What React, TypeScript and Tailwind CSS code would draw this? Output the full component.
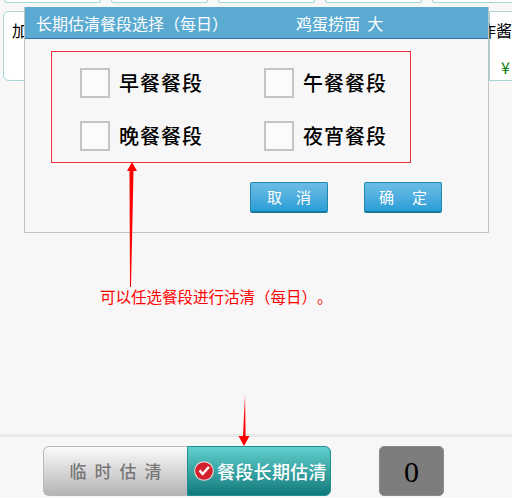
const font = { fontFamily: '"Noto Sans CJK SC", "Liberation Sans", sans-serif' };

function MealOption({ label }: { label: string }) {
  return (
    <div className="flex w-[184px] shrink-0 items-center">
      <div className="h-[30px] w-[30px] border-2 border-[#c4c4c4] bg-[#fbfbfb]" />
      <span className="ml-[9px] text-[20px] font-medium leading-[30px] tracking-[1px] text-black">{label}</span>
    </div>
  );
}

function DialogButton({ first, second, className }: { first: string; second: string; className: string }) {
  return (
    <button
      type="button"
      className={`flex h-[31px] w-[78px] items-center justify-center rounded-[2px] border border-[#1d88a8] border-b-2 border-b-[#177a9c] bg-gradient-to-b from-[#6cbde6] to-[#279ed6] text-[15px] text-white ${className}`}
    >
      <span>{first}</span>
      <span>{second}</span>
    </button>
  );
}

function TopCard({ className }: { className?: string }) {
  return <div className={`h-[3px] w-[97px] shrink-0 rounded-b-[5px] border border-t-0 border-[#a5d6d6] bg-white ${className ?? ""}`} />;
}

export default function App() {
  return (
    <div className="relative flex h-[498px] w-[512px] flex-col overflow-hidden bg-[#f7f7f7]" style={font}>
      <div className="flex h-[4px] gap-[10px] pl-[4px]">
        <TopCard />
        <TopCard />
        <TopCard />
        <TopCard />
        <TopCard />
      </div>

      <div className="mt-[7px] flex h-[70px] justify-between">
        <div className="ml-[3px] h-full w-[97px] rounded-[6px] border border-[#a5d6d6] bg-white pl-[8px] pt-[7px] text-[16px] leading-[22px] text-black">
          加
        </div>
        <div className="flex h-full w-[23px] flex-col justify-between border-y border-l border-[#a5d6d6] bg-white pb-[3px] pt-[7px]">
          <span className="whitespace-nowrap text-[16px] leading-[22px] text-black [direction:rtl]">炸酱</span>
          <span className="pl-[11px] text-[16px] leading-[20px] text-[#0a7d0a]">¥</span>
        </div>
      </div>

      <div className="flex-1" />

      <div className="h-[3px] bg-[#e8e8e8]" />
      <div className="flex h-[61px] pl-[43px] pt-[9px]">
        <button
          type="button"
          className="h-[50px] w-[144px] rounded-l-[6px] border border-r-0 border-[#b8b8b8] bg-gradient-to-b from-[#fbfbfb] to-[#b4b3b5] pl-[8px] text-[17px] font-medium tracking-[8px] text-[#777]"
        >
          临时估清
        </button>
        <button
          type="button"
          className="flex h-[50px] w-[144px] items-center rounded-r-[6px] border border-[#1f8f8f] bg-gradient-to-b from-[#5fd0cf] to-[#0d7a7c] pl-[6px] text-[18px] font-medium tracking-[0.3px] text-white"
        >
          <svg width="20" height="20" viewBox="0 0 20 20" className="shrink-0">
            <circle cx="10" cy="10" r="9.8" fill="#f2e4e4" />
            <circle cx="10" cy="10" r="8.8" fill="#d3202c" />
            <path d="M4.6 10.2 L8.6 14.8 L16 6.4 L13.9 5.2 L8.7 11.2 L6.4 8.6 Z" fill="#fff" />
          </svg>
          <span className="ml-[3px] leading-none">餐段长期估清</span>
        </button>
        <div className="ml-[48px] flex h-[50px] w-[65px] items-center justify-center rounded-[5px] border border-[#8c8c8c] bg-[#7d7d7d] text-[30px] text-black [font-family:'Liberation_Serif',serif]">
          0
        </div>
      </div>

      {/* dialog sits over the page */}
      <div className="absolute left-[24px] top-[7px] flex h-[226px] w-[465px] flex-col border-x border-b border-[#c2c2c2] bg-[#f7f7f7]">
        <div className="flex h-[32px] shrink-0 items-center border-b border-[#2f74a0] bg-[#5aaad2] pl-[11px] text-[16px] text-white [text-spacing-trim:space-all]">
          <span className="w-[260px]">长期估清餐段选择（每日）</span>
          <span className="whitespace-pre">鸡蛋捞面  大</span>
        </div>
        <div className="ml-[26px] mt-[12px] flex h-[112px] w-[360px] flex-col gap-[23px] border border-[#f0323c] pl-[28px] pt-[16px]">
          <div className="flex">
            <MealOption label="早餐餐段" />
            <MealOption label="午餐餐段" />
          </div>
          <div className="flex">
            <MealOption label="晚餐餐段" />
            <MealOption label="夜宵餐段" />
          </div>
        </div>
        <div className="ml-[225px] mt-[19px] flex gap-[36px]">
          <DialogButton first="取" second="消" className="gap-[14px]" />
          <DialogButton first="确" second="定" className="gap-[18px]" />
        </div>
      </div>

      {/* annotation arrows and note */}
      <svg className="absolute left-[120px] top-[160px]" width="24" height="130" viewBox="0 0 24 130">
        <path d="M12 2 L17 11 L13.5 11 L11 127 L10 127 L9.5 11 L7 11 Z" fill="#ff0000" />
      </svg>
      <p className="absolute left-[100px] top-[286px] whitespace-nowrap text-[15.5px] leading-[20px] text-[#ff0000] [text-spacing-trim:space-all]">
        可以任选餐段进行沽清（每日）。
      </p>
      <svg className="absolute left-[234px] top-[394px]" width="20" height="54" viewBox="0 0 20 54">
        <path d="M11 1 L11.6 42 L15.5 42 L10 52 L4.5 42 L9 42 Z" fill="#ff0000" />
      </svg>
    </div>
  );
}
